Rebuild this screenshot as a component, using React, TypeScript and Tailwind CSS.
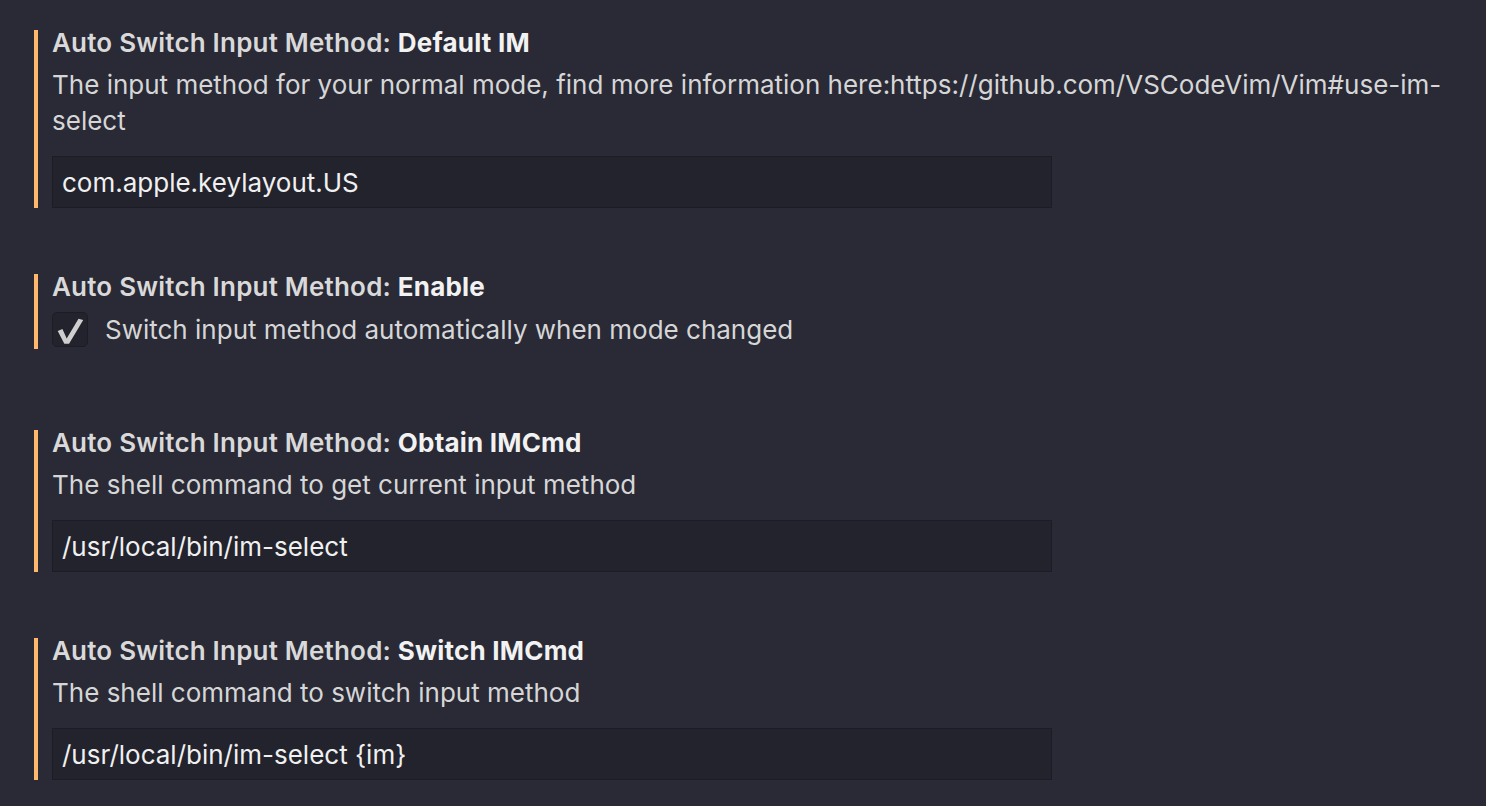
import React from "react";

const font = { fontFamily: "Inter, 'Noto Sans', sans-serif" };

function Title({ prefix, name }: { prefix: string; name: string }) {
  return (
    <div className="h-[26px] text-[26px] leading-[26px] tracking-[0.2px] whitespace-nowrap">
      <span className="font-semibold text-[#d9d9d9]">{prefix}</span>
      <span className="font-bold text-[#f2f2f2]">{name}</span>
    </div>
  );
}

function TextInput({ value }: { value: string }) {
  return (
    <div className="mt-[17px] h-[52px] w-[1000px] border border-[#1c1d24] bg-[#22232d] pl-[9px] flex items-center text-[26px] text-[#f0f0f0]">
      {value}
    </div>
  );
}

export default function App() {
  return (
    <div className="min-h-[806px] w-full bg-[#292a36] pl-[34px] pt-[30px] overflow-hidden" style={font}>
      <section className="border-l-4 border-[#ffb86c] pl-[14px]">
        <Title prefix="Auto Switch Input Method: " name="Default IM" />
        <div className="mt-[11px] text-[26px] leading-[36px] text-[#d6d6d6] whitespace-nowrap">
          The input method for your normal mode, find more information here:https://github.com/VSCodeVim/Vim#use-im-
          <br />
          select
        </div>
        <TextInput value="com.apple.keylayout.US" />
      </section>

      <section className="mt-[66px] border-l-4 border-[#ffb86c] pl-[14px]">
        <Title prefix="Auto Switch Input Method: " name="Enable" />
        <div className="mt-[12px] h-[37px] flex items-start">
          <div className="w-[36px] h-[35px] rounded-[5px] border border-[#1c1d24] bg-[#22232d] flex items-center justify-center">
            <svg width="36" height="35" viewBox="0 0 36 35">
              <polygon points="5,19 10,17 14.5,27 27,6 32,7.5 17,32.5 12,32.5" fill="#cfcfcf" />
            </svg>
          </div>
          <div className="ml-[17px] text-[26px] leading-[35px] text-[#d6d6d6] whitespace-nowrap">
            Switch input method automatically when mode changed
          </div>
        </div>
      </section>

      <section className="mt-[81px] border-l-4 border-[#ffb86c] pl-[14px]">
        <Title prefix="Auto Switch Input Method: " name="Obtain IMCmd" />
        <div className="mt-[11px] text-[26px] leading-[36px] text-[#d6d6d6]">
          The shell command to get current input method
        </div>
        <TextInput value="/usr/local/bin/im-select" />
      </section>

      <section className="mt-[66px] border-l-4 border-[#ffb86c] pl-[14px]">
        <Title prefix="Auto Switch Input Method: " name="Switch IMCmd" />
        <div className="mt-[11px] text-[26px] leading-[36px] text-[#d6d6d6]">
          The shell command to switch input method
        </div>
        <TextInput value="/usr/local/bin/im-select {im}" />
      </section>
    </div>
  );
}
